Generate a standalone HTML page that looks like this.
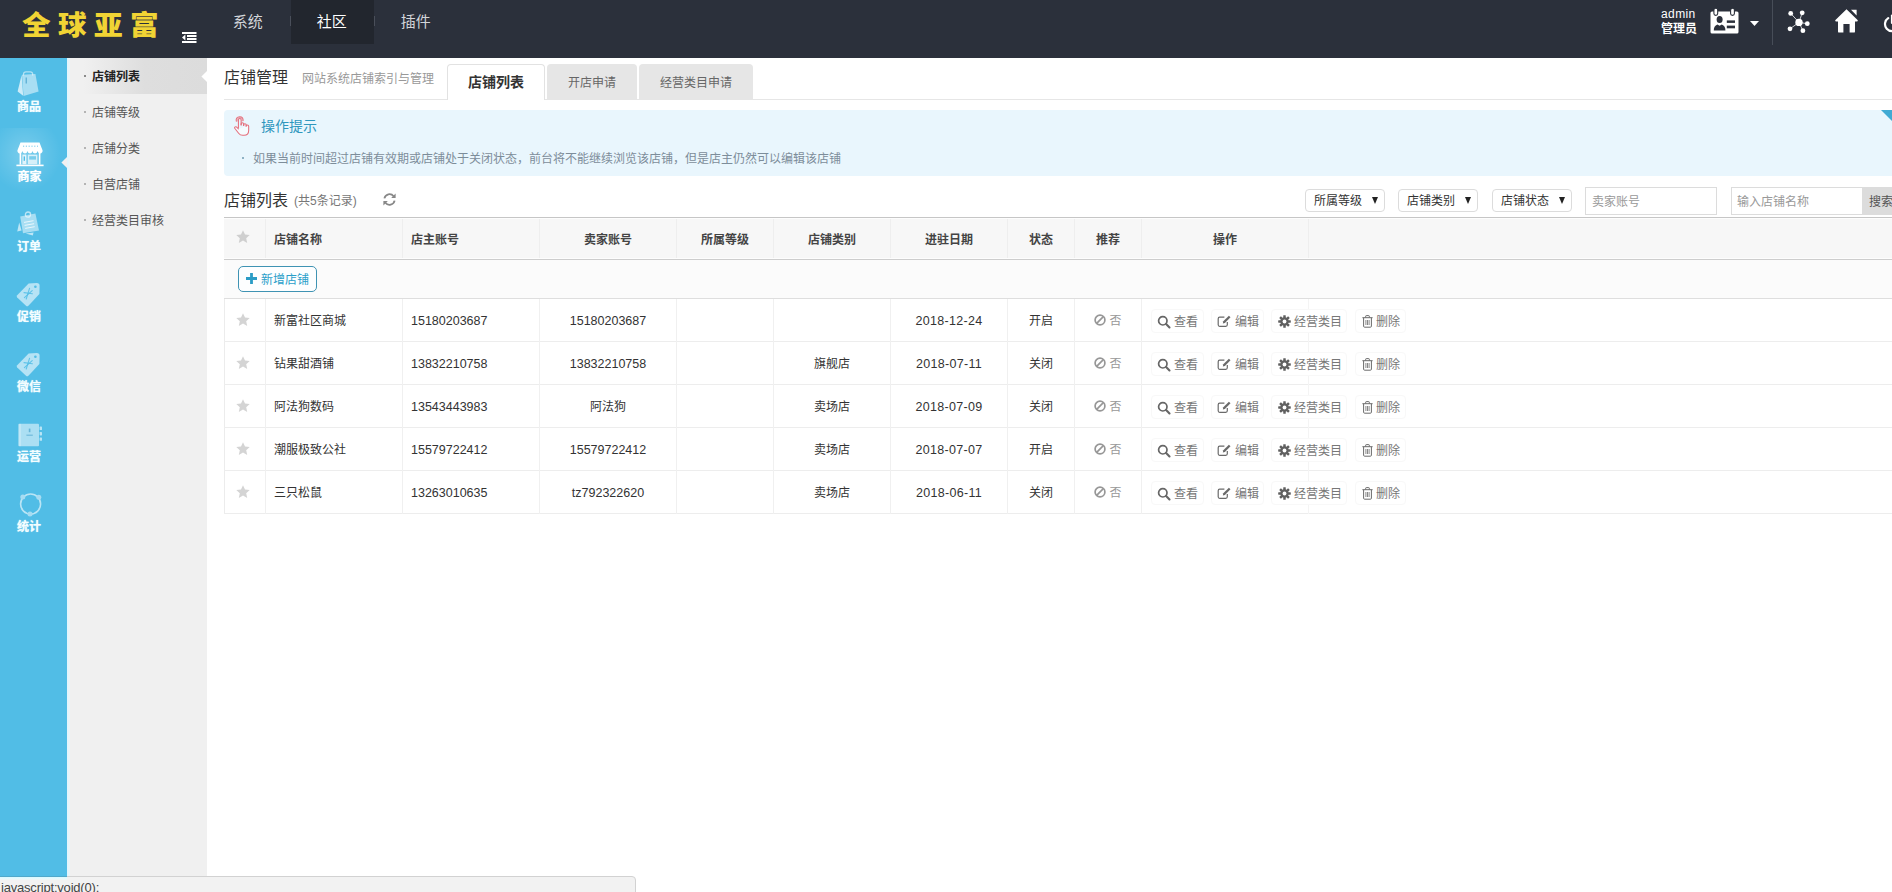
<!DOCTYPE html>
<html lang="zh-CN">
<head>
<meta charset="utf-8">
<title>店铺管理</title>
<style>
*{box-sizing:border-box;margin:0;padding:0}
html,body{width:1892px;height:892px;overflow:hidden;background:#fff}
body{font-family:"Liberation Sans","Noto Sans CJK SC",sans-serif;font-size:12px;color:#333;position:relative}
.a{position:absolute;white-space:nowrap}
svg{position:absolute;overflow:visible}
/* header */
#hdr{position:absolute;left:0;top:0;width:1892px;height:58px;background:#2b303b}
#logo{left:22px;top:1px;font-size:28.6px;font-weight:900;color:#f1d434;letter-spacing:7.4px;line-height:44px;font-family:"Noto Sans CJK SC",sans-serif;transform:scaleY(.96);transform-origin:0 50%}
.nav{position:absolute;top:0;height:44px;line-height:43px;text-indent:-1.5px;font-size:15px;color:#d3d5d9;text-align:center;width:83px}
.nav.on{background:#22262e;color:#fff}
.navsep{position:absolute;top:16px;width:1px;height:10px;background:#4a4f5a}
/* left bar */
#lbar{position:absolute;left:0;top:58px;width:67px;height:834px;background:#51bde6}
.li{position:absolute;left:0;width:58px;text-align:center;color:#f4fdff;font-size:12px;font-weight:700;line-height:14px;letter-spacing:0;text-shadow:0 0 1px rgba(235,252,255,.85)}
#sub{position:absolute;left:67px;top:58px;width:140px;height:834px;background:#f0f0f0}
.si{position:absolute;left:0;width:140px;height:36px;line-height:39px;padding-left:25px;font-size:12px;color:#555}
.si:before{content:"";position:absolute;left:17px;top:17px;width:2px;height:2px;background:#b4b4b4}
.si.on{background:linear-gradient(90deg,#f0f0f0 12%,#dedede 55%,#dcdcdc);color:#222;font-weight:700}
.si.on:before{background:#8a8a8a}
.tab{position:absolute;top:64px;height:35px;line-height:39px;text-align:center;font-size:12px;color:#666;background:#e6e6e6;border-radius:4px 4px 0 0}
.tab.on{height:36px;background:#fff;border:1px solid #e2e2e2;border-bottom:0;font-size:14px;font-weight:700;color:#333;line-height:34px}
.sel{position:absolute;top:189px;width:80px;height:23px;border:1px solid #dcdcdc;border-radius:4px;background:#fff;line-height:23px;padding-left:8px;font-size:12px;color:#333}
.sel i{position:absolute;right:6px;top:7px;width:0;height:0;border-left:3.5px solid transparent;border-right:3.5px solid transparent;border-top:7px solid #222}
.inp{position:absolute;top:187px;height:28px;border:1px solid #dcdcdc;background:#fff;line-height:29px;padding-left:6px;font-size:12px;color:#999}
/* table */
#thead{position:absolute;left:224px;top:217px;width:1668px;height:43px;background:#f7f7f7;border-top:1px solid #c6c6c6;border-bottom:1px solid #cdcdcd;box-shadow:inset 0 1px #fdfdfd,inset 0 -1px #fdfdfd}
#tool{position:absolute;left:224px;top:260px;width:1668px;height:39px;background:#fbfbfb;border-bottom:1px solid #dedede}
.th{position:absolute;top:219px;height:39px;line-height:42px;font-weight:700;color:#444;font-size:12px;text-align:center;border-left:1px solid #eee}
.row{position:absolute;left:224px;width:1668px;height:43px;border-bottom:1px solid #ededed;box-shadow:inset 1px 0 #ececec}
.c{position:absolute;top:0;height:43px;line-height:45px;text-align:center;border-left:1px solid #f0f0f0;font-size:12px;color:#333;white-space:nowrap}
.c.l{text-align:left;padding-left:8px}
.n{font-size:12.5px}
.d{letter-spacing:.3px}
.btn{position:absolute;top:10px;height:24px;border:1px solid #f8f8f8;border-radius:4px;background:#fff;color:#777;font-size:12px;line-height:24px;white-space:nowrap}
.btn span{position:absolute;top:0}
</style>
</head>
<body>
<div id="hdr">
  <div id="logo" class="a">全球亚富</div>
  <svg style="left:182px;top:32px" width="15" height="11" viewBox="0 0 15 11"><g fill="#fff"><rect x="0" y="0" width="14.5" height="2"/><rect x="5" y="3" width="9.5" height="2"/><rect x="5" y="6" width="9.5" height="2"/><rect x="0" y="9" width="14.5" height="2"/><path d="M0 5.5 L3.4 2.6 V8.4 Z"/></g></svg>
  <div class="nav" style="left:207px">系统</div>
  <div class="nav on" style="left:291px">社区</div>
  <div class="nav" style="left:375px">插件</div>
  <div class="navsep" style="left:290px"></div>
  <div class="navsep" style="left:374px"></div>
  <!-- right -->
  <div class="a" style="left:1661px;top:7px;font-size:12px;line-height:14px;color:#fff;letter-spacing:.4px">admin</div>
  <div class="a" style="left:1661px;top:22px;font-size:12px;line-height:14px;color:#fff;font-weight:700">管理员</div>
  <svg style="left:1710px;top:8px" width="29" height="26" viewBox="0 0 29 26">
    <path fill="#fff" d="M2 3.4 H27 Q28.5 3.4 28.5 4.9 V24 Q28.5 25.5 27 25.5 H2 Q0.5 25.5 0.5 24 V4.9 Q0.5 3.4 2 3.4 Z"/>
    <rect x="3.9" y="0.2" width="3.8" height="7.2" rx="1.9" fill="#fff" stroke="#2b303b" stroke-width="1.1"/>
    <rect x="20.6" y="0.2" width="3.8" height="7.2" rx="1.9" fill="#fff" stroke="#2b303b" stroke-width="1.1"/>
    <ellipse cx="9.6" cy="11.6" rx="3" ry="3.5" fill="#2b303b"/>
    <path fill="#2b303b" d="M3.8 22.6 Q3.6 18.2 7.4 16.6 L9.6 17.8 L11.8 16.6 Q15.6 18.2 15.4 22.6 Z"/>
    <rect x="16.8" y="12.4" width="8.2" height="2.5" fill="#2b303b"/>
    <rect x="16.8" y="17.6" width="8.2" height="2.7" fill="#2b303b"/>
  </svg>
  <svg style="left:1750px;top:21px" width="9" height="5" viewBox="0 0 9 5"><path d="M0 0 H9 L4.5 5 Z" fill="#fff"/></svg>
  <div class="a" style="left:1772px;top:0;width:1px;height:45px;background:#474d58"></div>
  <svg style="left:1786px;top:10px" width="25" height="24" viewBox="0 0 25 24">
    <g stroke="#cfd1d4" stroke-width="1"><line x1="13" y1="12.4" x2="4.7" y2="3.4"/><line x1="13" y1="12.4" x2="16.2" y2="2.8"/><line x1="13" y1="12.4" x2="21.3" y2="13.7"/><line x1="13" y1="12.4" x2="16.9" y2="20.7"/><line x1="13" y1="12.4" x2="4" y2="18.8"/></g>
    <g fill="#fff"><circle cx="13" cy="12.4" r="3.7"/><circle cx="4.7" cy="3.4" r="2.4"/><circle cx="16.2" cy="2.8" r="2.4"/><circle cx="21.3" cy="13.7" r="2.4"/><circle cx="16.9" cy="20.7" r="2.4"/><circle cx="4" cy="18.8" r="2.4"/></g>
  </svg>
  <svg style="left:1835px;top:9px" width="23" height="24" viewBox="0 0 23 24">
    <path fill="#fff" d="M11.5 0.3 L22.8 11.2 Q23 12.6 21.6 12.6 H20 V22.4 Q20 23.6 18.8 23.6 H14.6 V15 H8.4 V23.6 H4.2 Q3 23.6 3 22.4 V12.6 H1.4 Q0 12.6 0.2 11.2 Z"/>
    <path fill="#fff" d="M16 0.8 H21.6 V6.6 Z"/>
  </svg>
  <svg style="left:1883px;top:15px" width="18" height="18" viewBox="0 0 18 18"><path d="M5.2 3.2 A7 7 0 1 0 12.8 3.2" fill="none" stroke="#fff" stroke-width="2.2" stroke-linecap="round"/><line x1="9" y1="0.6" x2="9" y2="8" stroke="#fff" stroke-width="2.2" stroke-linecap="round"/></svg>
</div>
<div id="lbar">
  <!-- active glow -->
  <div class="a" style="left:0;top:70px;width:67px;height:70px;background:radial-gradient(ellipse 36px 38px at 25px 26px,rgba(255,255,255,.24),rgba(255,255,255,.09) 60%,rgba(255,255,255,0) 100%)"></div>
  <!-- 商品 bag -->
  <svg style="left:17px;top:13px" width="22" height="26" viewBox="0 0 22 26">
    <path d="M6.5 4.5 V3.2 Q6.5 0.8 9 0.8 H13.2 Q15.7 0.8 15.7 3.2 V4.5" fill="none" stroke="#fff" stroke-opacity=".55" stroke-width="1.2"/>
    <path d="M4.6 4 L6.2 24.8 L0.6 20.4 Z" fill="#fff" fill-opacity=".7"/>
    <path d="M5 3.8 L18.4 3 L21.6 20.4 L6.6 25 Z" fill="#fff" fill-opacity=".5"/>
    <rect x="8.6" y="6.5" width="1.3" height="6" fill="#4aa3cc" fill-opacity=".8"/>
  </svg>
  <div class="li" style="top:42px">商品</div>
  <!-- 商家 store (active) -->
  <svg style="left:16px;top:84px" width="28" height="25" viewBox="0 0 28 25">
    <path fill="#fff" d="M4.5 0.5 H23.5 L26.6 8.6 Q26.6 11.4 24.1 11.4 Q21.8 11.4 21.6 9 Q21.3 11.4 19 11.4 Q16.7 11.4 16.5 9 Q16.2 11.4 14 11.4 Q11.7 11.4 11.5 9 Q11.2 11.4 9 11.4 Q6.6 11.4 6.4 9 Q6.2 11.4 3.9 11.4 Q1.4 11.4 1.4 8.6 Z"/>
    <g stroke="#51bde6" stroke-width=".8" stroke-dasharray="1.2 1.6"><line x1="7" y1="4.2" x2="22" y2="4.2"/></g>
    <rect x="3.6" y="11" width="1.6" height="11.6" fill="#fff"/>
    <rect x="22.8" y="11" width="1.6" height="11.6" fill="#fff"/>
    <rect x="6.4" y="12.6" width="4" height="9.6" fill="#fff" fill-opacity=".8"/>
    <rect x="7.6" y="14.4" width="1.4" height="4.4" fill="#51bde6"/>
    <rect x="11.8" y="12.6" width="9.6" height="9.6" fill="#fff" fill-opacity=".72"/>
    <rect x="13.2" y="14.2" width="6.8" height="3.4" fill="#51bde6" fill-opacity=".7"/>
    <rect x="0.4" y="22.6" width="27.2" height="1.6" fill="#fff"/>
  </svg>
  <div class="li" style="top:112px;color:#fff;padding-left:1px">商家</div>
  <!-- arrow -->
  <svg style="left:61px;top:99px" width="6" height="11" viewBox="0 0 6 11"><path d="M6 0 V11 L0.4 5.5 Z" fill="#f0f0f0"/></svg>
  <!-- 订单 -->
  <svg style="left:17px;top:153px" width="23" height="26" viewBox="0 0 23 26">
    <path d="M2.2 11.5 L0.2 20.6 L4.6 19.6 Z" fill="#fff" fill-opacity=".62"/>
    <path d="M8.6 22.4 L15.8 24.6 L16.6 21.6 Z" fill="#fff" fill-opacity=".62"/>
    <path d="M3.2 5.4 L18.4 2.6 L22 19.4 L6 22.2 Z" fill="#fff" fill-opacity=".5"/>
    <circle cx="11" cy="3.6" r="2.6" fill="none" stroke="#fff" stroke-opacity=".6" stroke-width="1.3"/>
    <g stroke="#fff" stroke-opacity=".75" stroke-width="1"><line x1="7" y1="11.4" x2="16.5" y2="9.7"/><line x1="7.6" y1="14.4" x2="17.1" y2="12.7"/><line x1="8.2" y1="17.4" x2="17.7" y2="15.7"/></g>
  </svg>
  <div class="li" style="top:182px">订单</div>
  <!-- 促销 tag -->
  <svg style="left:16px;top:224px" width="24" height="25" viewBox="0 0 24 25">
    <path d="M12.6 1.4 L20.8 1 Q23.6 1 23.6 3.8 L23.4 12 L12.4 23.8 Q11.2 24.8 10 23.8 L1.2 15.6 Q0.2 14.4 1.2 13.2 Z" fill="#fff" fill-opacity=".58"/>
    <circle cx="19.4" cy="4.8" r="1.3" fill="#51bde6"/>
    <g stroke="#51bde6" stroke-opacity=".85" stroke-width="1.1" stroke-linecap="round"><line x1="13.6" y1="6.2" x2="10.2" y2="17"/><line x1="8" y1="10.6" x2="16.4" y2="11.8"/><line x1="8.4" y1="15.6" x2="16.2" y2="8.6"/></g>
  </svg>
  <div class="li" style="top:252px">促销</div>
  <!-- 微信 tag -->
  <svg style="left:16px;top:294px" width="24" height="25" viewBox="0 0 24 25">
    <path d="M12.6 1.4 L20.8 1 Q23.6 1 23.6 3.8 L23.4 12 L12.4 23.8 Q11.2 24.8 10 23.8 L1.2 15.6 Q0.2 14.4 1.2 13.2 Z" fill="#fff" fill-opacity=".58"/>
    <circle cx="19.4" cy="4.8" r="1.3" fill="#51bde6"/>
    <g stroke="#51bde6" stroke-opacity=".85" stroke-width="1.1" stroke-linecap="round"><line x1="13.6" y1="6.2" x2="10.2" y2="17"/><line x1="8" y1="10.6" x2="16.4" y2="11.8"/><line x1="8.4" y1="15.6" x2="16.2" y2="8.6"/></g>
  </svg>
  <div class="li" style="top:322px">微信</div>
  <!-- 运营 notebook -->
  <svg style="left:18px;top:365px" width="25" height="24" viewBox="0 0 25 24">
    <rect x="0.5" y="0.8" width="20.5" height="22.4" rx="1" fill="#fff" fill-opacity=".52"/>
    <rect x="0.5" y="0.8" width="2.6" height="22.4" fill="#fff" fill-opacity=".25"/>
    <g fill="#fff" fill-opacity=".6"><rect x="21.6" y="3.6" width="2.4" height="3.4" rx=".6"/><rect x="21.6" y="9" width="2.4" height="3.4" rx=".6"/><rect x="21.6" y="14.4" width="2.4" height="3.4" rx=".6"/></g>
    <rect x="10.8" y="5.6" width="1.6" height="3.6" fill="#4aa3cc" fill-opacity=".7"/>
    <rect x="8.4" y="11.6" width="6.4" height="1.2" fill="#4aa3cc" fill-opacity=".6"/>
  </svg>
  <div class="li" style="top:392px">运营</div>
  <!-- 统计 -->
  <svg style="left:19px;top:434px" width="24" height="25" viewBox="0 0 24 25">
    <circle cx="11.6" cy="12" r="10" fill="none" stroke="#fff" stroke-opacity=".6" stroke-width="1.6"/>
    <g fill="#a6dcf2"><circle cx="3.8" cy="5" r="2.5"/><circle cx="19.8" cy="5.2" r="2.5"/><circle cx="11" cy="22" r="2.5"/></g>
  </svg>
  <div class="li" style="top:462px">统计</div>
</div>
<div id="sub">
  <div class="si on" style="top:0">店铺列表</div>
  <svg style="left:134px;top:13px" width="6" height="11" viewBox="0 0 6 11"><path d="M6 0 V11 L0.4 5.5 Z" fill="#fff"/></svg>
  <div class="si" style="top:36px">店铺等级</div>
  <div class="si" style="top:72px">店铺分类</div>
  <div class="si" style="top:108px">自营店铺</div>
  <div class="si" style="top:144px">经营类目审核</div>
  <div class="a" style="left:0;top:0;width:3px;height:834px;background:linear-gradient(90deg,#e0f4fc,#e6f5fb 66%,#edf3f5)"></div>
</div>

<!-- title -->
<div class="a" style="left:224px;top:66px;font-size:16px;line-height:24px;color:#333">店铺管理</div>
<div class="a" style="left:302px;top:69px;font-size:12px;line-height:20px;color:#999">网站系统店铺索引与管理</div>
<div class="a" style="left:224px;top:99px;width:1668px;height:1px;background:#e6e6e6"></div>
<div class="tab on" style="left:447px;width:98px">店铺列表</div>
<div class="tab" style="left:547px;width:90px">开店申请</div>
<div class="tab" style="left:639px;width:114px">经营类目申请</div>
<!-- tip -->
<div class="a" style="left:224px;top:110px;width:1700px;height:66px;background:#e9f6fd;border-radius:4px"></div>
<svg style="left:1881px;top:110px" width="11" height="11" viewBox="0 0 11 11"><path d="M0 0 H11 V11 Z" fill="#41aad3"/></svg>
<svg style="left:233px;top:115.6px" width="18.4" height="20.6" viewBox="0 0 19 22" preserveAspectRatio="none">
  <g fill="none" stroke="#e56f7c" stroke-width="1.1" stroke-linecap="round" stroke-linejoin="round">
    <path d="M5.6 12.4 V4.2 Q5.6 2.6 7 2.6 Q8.4 2.6 8.4 4.2 V9.4"/>
    <path d="M8.4 9.6 V8.4 Q8.4 7.2 9.7 7.2 Q11 7.2 11 8.4 V10.2"/>
    <path d="M11 10.2 V9.4 Q11 8.2 12.3 8.2 Q13.6 8.2 13.6 9.4 V11"/>
    <path d="M13.6 11 V10.6 Q13.6 9.6 14.8 9.6 Q16.2 9.6 16.2 11 V15.2 Q16.2 20.6 11.4 20.6 H10 Q7.4 20.6 5.8 18.4 L2 13.4 Q1.2 12.2 2.2 11.6 Q3.2 11 4.2 12.2 L5.6 13.8" fill="#fff" fill-opacity=".55"/>
    <path d="M4.4 5.4 Q4 2 7 1.8 Q9.8 2 9.4 5" stroke-opacity=".55"/>
    <path d="M3.4 5.6 Q2.6 1.2 7 0.8 Q10.8 1 10.4 5"/>
  </g>
</svg>
<div class="a" style="left:261px;top:116px;font-size:14px;line-height:20px;color:#2f97bd">操作提示</div>
<div class="a" style="left:242px;top:157px;width:2px;height:2px;background:#8fb2c4"></div>
<div class="a" style="left:253px;top:149px;font-size:12px;line-height:20px;color:#7d8d9a">如果当前时间超过店铺有效期或店铺处于关闭状态，前台将不能继续浏览该店铺，但是店主仍然可以编辑该店铺</div>
<!-- list title -->
<div class="a" style="left:224px;top:189px;font-size:16px;line-height:24px;color:#333">店铺列表</div>
<div class="a" style="left:294px;top:191px;font-size:12px;line-height:20px;color:#777">(共5条记录)</div>
<svg style="left:383px;top:193px" width="13" height="13" viewBox="0 0 13 13">
  <g fill="none" stroke="#888" stroke-width="1.8"><path d="M1.4 5.4 A5.2 5.2 0 0 1 10.6 3.2"/><path d="M11.6 7.6 A5.2 5.2 0 0 1 2.4 9.8"/></g>
  <path d="M12.6 0.6 V5 H8.2 Z" fill="#888"/><path d="M0.4 12.4 V8 H4.8 Z" fill="#888"/>
</svg>
<!-- filters -->
<div class="sel" style="left:1305px">所属等级<i></i></div>
<div class="sel" style="left:1398px">店铺类别<i></i></div>
<div class="sel" style="left:1492px">店铺状态<i></i></div>
<div class="inp" style="left:1585px;width:132px">卖家账号</div>
<div class="inp" style="left:1731px;width:133px;padding-left:5px">输入店铺名称</div>
<div class="a" style="left:1862px;top:187px;width:40px;height:28px;background:#dcdcdc;line-height:31px;padding-left:7px;font-size:12px;color:#555">搜索</div>
<div id="thead"></div><div id="tool"></div>
<div class="th" style="left:224px;width:41px;border-left:0;"></div>
<svg style="left:236px;top:230px" width="14" height="13" viewBox="0 0 14 13"><path d="M7 0.3 L9 4.6 L13.7 5.1 L10.2 8.3 L11.2 12.9 L7 10.5 L2.8 12.9 L3.8 8.3 L0.3 5.1 L5 4.6 Z" fill="#cfcfcf"/></svg>
<div class="th" style="left:265px;width:137px;text-align:left;padding-left:8px">店铺名称</div>
<div class="th" style="left:402px;width:137px;text-align:left;padding-left:8px">店主账号</div>
<div class="th" style="left:539px;width:137px">卖家账号</div>
<div class="th" style="left:676px;width:97px">所属等级</div>
<div class="th" style="left:773px;width:117px">店铺类别</div>
<div class="th" style="left:890px;width:117px">进驻日期</div>
<div class="th" style="left:1007px;width:67px">状态</div>
<div class="th" style="left:1074px;width:67px">推荐</div>
<div class="th" style="left:1141px;width:167px">操作</div>
<div class="th" style="left:1308px;width:584px"></div>
<div class="a" style="left:238px;top:266px;width:79px;height:26px;border:1px solid #3f93b3;border-radius:5px;background:#fdfeff"></div>
<svg style="left:246px;top:273px" width="11" height="11" viewBox="0 0 11 11"><path d="M4.1 0 H6.9 V4.1 H11 V6.9 H6.9 V11 H4.1 V6.9 H0 V4.1 H4.1 Z" fill="#2a9cc6"/></svg>
<div class="a" style="left:261px;top:270px;font-size:12px;line-height:20px;color:#2b9fca">新增店铺</div>
<div class="row" style="top:299px">
<div class="c" style="left:0px;width:41px;border-left:0;"></div>
<div class="c l" style="left:41px;width:137px">新富社区商城</div>
<div class="c l n" style="left:178px;width:137px">15180203687</div>
<div class="c n" style="left:315px;width:137px">15180203687</div>
<div class="c" style="left:452px;width:97px"></div>
<div class="c" style="left:549px;width:117px"></div>
<div class="c n d" style="left:666px;width:117px">2018-12-24</div>
<div class="c" style="left:783px;width:67px">开启</div>
<div class="c" style="left:850px;width:67px;color:#999;padding-left:15px">否</div>
<div class="c" style="left:917px;width:167px"></div>
<div class="c" style="left:1084px;width:584px;border-left-color:#f4f4f4"></div>
<svg style="left:12px;top:14px" width="14" height="13" viewBox="0 0 14 13"><path d="M7 0.3 L9 4.6 L13.7 5.1 L10.2 8.3 L11.2 12.9 L7 10.5 L2.8 12.9 L3.8 8.3 L0.3 5.1 L5 4.6 Z" fill="#d4d4d4"/></svg>
<svg style="left:870px;top:15px" width="12" height="12" viewBox="0 0 12 12"><circle cx="6" cy="6" r="4.9" fill="none" stroke="#979797" stroke-width="1.7"/><line x1="2.7" y1="9.3" x2="9.3" y2="2.7" stroke="#979797" stroke-width="1.7"/></svg>
<div class="btn" style="left:927px;width:53px"><svg style="left:5px;top:5px" width="14" height="14" viewBox="0 0 14 14"><circle cx="5.8" cy="5.8" r="4.2" fill="none" stroke="#666" stroke-width="1.7"/><line x1="9.1" y1="9.1" x2="12.5" y2="12.5" stroke="#666" stroke-width="2.1" stroke-linecap="round"/></svg><span style="left:22px">查看</span></div>
<div class="btn" style="left:987px;width:53px"><svg style="left:5px;top:4px" width="15" height="14" viewBox="0 0 15 14"><path d="M10.3 8 V10.8 Q10.3 12.3 8.8 12.3 H2.7 Q1.2 12.3 1.2 10.8 V4.7 Q1.2 3.2 2.7 3.2 H7.4" fill="none" stroke="#6a6a6a" stroke-width="1.2"/><path d="M5.8 9.4 L6.3 7.3 L11.9 1.7 L13.5 3.3 L7.9 8.9 Z" fill="#6a6a6a"/></svg><span style="left:23px">编辑</span></div>
<div class="btn" style="left:1047px;width:76px"><svg style="left:6px;top:5px" width="13" height="13" viewBox="0 0 13 13"><g transform="translate(6.5 6.5)"><circle r="4.2" fill="#606060"/><g fill="#606060"><rect x="-1.25" y="-6.3" width="2.5" height="12.6" rx=".4"/><rect x="-1.25" y="-6.3" width="2.5" height="12.6" rx=".4" transform="rotate(45)"/><rect x="-1.25" y="-6.3" width="2.5" height="12.6" rx=".4" transform="rotate(90)"/><rect x="-1.25" y="-6.3" width="2.5" height="12.6" rx=".4" transform="rotate(135)"/></g><circle r="1.9" fill="#fff"/></g></svg><span style="left:22px">经营类目</span></div>
<div class="btn" style="left:1131px;width:51px"><svg style="left:6px;top:5px" width="11" height="13" viewBox="0 0 11 13"><g fill="none" stroke="#6a6a6a" stroke-width="1"><path d="M0.4 2.7 H10.6"/><path d="M3.7 2.5 V1.2 Q3.7 .6 4.3 .6 H6.7 Q7.3 .6 7.3 1.2 V2.5"/><path d="M1.6 2.9 V11.2 Q1.6 12.2 2.6 12.2 H8.4 Q9.4 12.2 9.4 11.2 V2.9"/><path d="M3.9 5 V10 M5.5 5 V10 M7.1 5 V10" stroke-width=".8"/></g></svg><span style="left:20px">删除</span></div>
</div>
<div class="row" style="top:342px">
<div class="c" style="left:0px;width:41px;border-left:0;"></div>
<div class="c l" style="left:41px;width:137px">钻果甜酒铺</div>
<div class="c l n" style="left:178px;width:137px">13832210758</div>
<div class="c n" style="left:315px;width:137px">13832210758</div>
<div class="c" style="left:452px;width:97px"></div>
<div class="c" style="left:549px;width:117px">旗舰店</div>
<div class="c n d" style="left:666px;width:117px">2018-07-11</div>
<div class="c" style="left:783px;width:67px">关闭</div>
<div class="c" style="left:850px;width:67px;color:#999;padding-left:15px">否</div>
<div class="c" style="left:917px;width:167px"></div>
<div class="c" style="left:1084px;width:584px;border-left-color:#f4f4f4"></div>
<svg style="left:12px;top:14px" width="14" height="13" viewBox="0 0 14 13"><path d="M7 0.3 L9 4.6 L13.7 5.1 L10.2 8.3 L11.2 12.9 L7 10.5 L2.8 12.9 L3.8 8.3 L0.3 5.1 L5 4.6 Z" fill="#d4d4d4"/></svg>
<svg style="left:870px;top:15px" width="12" height="12" viewBox="0 0 12 12"><circle cx="6" cy="6" r="4.9" fill="none" stroke="#979797" stroke-width="1.7"/><line x1="2.7" y1="9.3" x2="9.3" y2="2.7" stroke="#979797" stroke-width="1.7"/></svg>
<div class="btn" style="left:927px;width:53px"><svg style="left:5px;top:5px" width="14" height="14" viewBox="0 0 14 14"><circle cx="5.8" cy="5.8" r="4.2" fill="none" stroke="#666" stroke-width="1.7"/><line x1="9.1" y1="9.1" x2="12.5" y2="12.5" stroke="#666" stroke-width="2.1" stroke-linecap="round"/></svg><span style="left:22px">查看</span></div>
<div class="btn" style="left:987px;width:53px"><svg style="left:5px;top:4px" width="15" height="14" viewBox="0 0 15 14"><path d="M10.3 8 V10.8 Q10.3 12.3 8.8 12.3 H2.7 Q1.2 12.3 1.2 10.8 V4.7 Q1.2 3.2 2.7 3.2 H7.4" fill="none" stroke="#6a6a6a" stroke-width="1.2"/><path d="M5.8 9.4 L6.3 7.3 L11.9 1.7 L13.5 3.3 L7.9 8.9 Z" fill="#6a6a6a"/></svg><span style="left:23px">编辑</span></div>
<div class="btn" style="left:1047px;width:76px"><svg style="left:6px;top:5px" width="13" height="13" viewBox="0 0 13 13"><g transform="translate(6.5 6.5)"><circle r="4.2" fill="#606060"/><g fill="#606060"><rect x="-1.25" y="-6.3" width="2.5" height="12.6" rx=".4"/><rect x="-1.25" y="-6.3" width="2.5" height="12.6" rx=".4" transform="rotate(45)"/><rect x="-1.25" y="-6.3" width="2.5" height="12.6" rx=".4" transform="rotate(90)"/><rect x="-1.25" y="-6.3" width="2.5" height="12.6" rx=".4" transform="rotate(135)"/></g><circle r="1.9" fill="#fff"/></g></svg><span style="left:22px">经营类目</span></div>
<div class="btn" style="left:1131px;width:51px"><svg style="left:6px;top:5px" width="11" height="13" viewBox="0 0 11 13"><g fill="none" stroke="#6a6a6a" stroke-width="1"><path d="M0.4 2.7 H10.6"/><path d="M3.7 2.5 V1.2 Q3.7 .6 4.3 .6 H6.7 Q7.3 .6 7.3 1.2 V2.5"/><path d="M1.6 2.9 V11.2 Q1.6 12.2 2.6 12.2 H8.4 Q9.4 12.2 9.4 11.2 V2.9"/><path d="M3.9 5 V10 M5.5 5 V10 M7.1 5 V10" stroke-width=".8"/></g></svg><span style="left:20px">删除</span></div>
</div>
<div class="row" style="top:385px">
<div class="c" style="left:0px;width:41px;border-left:0;"></div>
<div class="c l" style="left:41px;width:137px">阿法狗数码</div>
<div class="c l n" style="left:178px;width:137px">13543443983</div>
<div class="c" style="left:315px;width:137px">阿法狗</div>
<div class="c" style="left:452px;width:97px"></div>
<div class="c" style="left:549px;width:117px">卖场店</div>
<div class="c n d" style="left:666px;width:117px">2018-07-09</div>
<div class="c" style="left:783px;width:67px">关闭</div>
<div class="c" style="left:850px;width:67px;color:#999;padding-left:15px">否</div>
<div class="c" style="left:917px;width:167px"></div>
<div class="c" style="left:1084px;width:584px;border-left-color:#f4f4f4"></div>
<svg style="left:12px;top:14px" width="14" height="13" viewBox="0 0 14 13"><path d="M7 0.3 L9 4.6 L13.7 5.1 L10.2 8.3 L11.2 12.9 L7 10.5 L2.8 12.9 L3.8 8.3 L0.3 5.1 L5 4.6 Z" fill="#d4d4d4"/></svg>
<svg style="left:870px;top:15px" width="12" height="12" viewBox="0 0 12 12"><circle cx="6" cy="6" r="4.9" fill="none" stroke="#979797" stroke-width="1.7"/><line x1="2.7" y1="9.3" x2="9.3" y2="2.7" stroke="#979797" stroke-width="1.7"/></svg>
<div class="btn" style="left:927px;width:53px"><svg style="left:5px;top:5px" width="14" height="14" viewBox="0 0 14 14"><circle cx="5.8" cy="5.8" r="4.2" fill="none" stroke="#666" stroke-width="1.7"/><line x1="9.1" y1="9.1" x2="12.5" y2="12.5" stroke="#666" stroke-width="2.1" stroke-linecap="round"/></svg><span style="left:22px">查看</span></div>
<div class="btn" style="left:987px;width:53px"><svg style="left:5px;top:4px" width="15" height="14" viewBox="0 0 15 14"><path d="M10.3 8 V10.8 Q10.3 12.3 8.8 12.3 H2.7 Q1.2 12.3 1.2 10.8 V4.7 Q1.2 3.2 2.7 3.2 H7.4" fill="none" stroke="#6a6a6a" stroke-width="1.2"/><path d="M5.8 9.4 L6.3 7.3 L11.9 1.7 L13.5 3.3 L7.9 8.9 Z" fill="#6a6a6a"/></svg><span style="left:23px">编辑</span></div>
<div class="btn" style="left:1047px;width:76px"><svg style="left:6px;top:5px" width="13" height="13" viewBox="0 0 13 13"><g transform="translate(6.5 6.5)"><circle r="4.2" fill="#606060"/><g fill="#606060"><rect x="-1.25" y="-6.3" width="2.5" height="12.6" rx=".4"/><rect x="-1.25" y="-6.3" width="2.5" height="12.6" rx=".4" transform="rotate(45)"/><rect x="-1.25" y="-6.3" width="2.5" height="12.6" rx=".4" transform="rotate(90)"/><rect x="-1.25" y="-6.3" width="2.5" height="12.6" rx=".4" transform="rotate(135)"/></g><circle r="1.9" fill="#fff"/></g></svg><span style="left:22px">经营类目</span></div>
<div class="btn" style="left:1131px;width:51px"><svg style="left:6px;top:5px" width="11" height="13" viewBox="0 0 11 13"><g fill="none" stroke="#6a6a6a" stroke-width="1"><path d="M0.4 2.7 H10.6"/><path d="M3.7 2.5 V1.2 Q3.7 .6 4.3 .6 H6.7 Q7.3 .6 7.3 1.2 V2.5"/><path d="M1.6 2.9 V11.2 Q1.6 12.2 2.6 12.2 H8.4 Q9.4 12.2 9.4 11.2 V2.9"/><path d="M3.9 5 V10 M5.5 5 V10 M7.1 5 V10" stroke-width=".8"/></g></svg><span style="left:20px">删除</span></div>
</div>
<div class="row" style="top:428px">
<div class="c" style="left:0px;width:41px;border-left:0;"></div>
<div class="c l" style="left:41px;width:137px">潮服极致公社</div>
<div class="c l n" style="left:178px;width:137px">15579722412</div>
<div class="c n" style="left:315px;width:137px">15579722412</div>
<div class="c" style="left:452px;width:97px"></div>
<div class="c" style="left:549px;width:117px">卖场店</div>
<div class="c n d" style="left:666px;width:117px">2018-07-07</div>
<div class="c" style="left:783px;width:67px">开启</div>
<div class="c" style="left:850px;width:67px;color:#999;padding-left:15px">否</div>
<div class="c" style="left:917px;width:167px"></div>
<div class="c" style="left:1084px;width:584px;border-left-color:#f4f4f4"></div>
<svg style="left:12px;top:14px" width="14" height="13" viewBox="0 0 14 13"><path d="M7 0.3 L9 4.6 L13.7 5.1 L10.2 8.3 L11.2 12.9 L7 10.5 L2.8 12.9 L3.8 8.3 L0.3 5.1 L5 4.6 Z" fill="#d4d4d4"/></svg>
<svg style="left:870px;top:15px" width="12" height="12" viewBox="0 0 12 12"><circle cx="6" cy="6" r="4.9" fill="none" stroke="#979797" stroke-width="1.7"/><line x1="2.7" y1="9.3" x2="9.3" y2="2.7" stroke="#979797" stroke-width="1.7"/></svg>
<div class="btn" style="left:927px;width:53px"><svg style="left:5px;top:5px" width="14" height="14" viewBox="0 0 14 14"><circle cx="5.8" cy="5.8" r="4.2" fill="none" stroke="#666" stroke-width="1.7"/><line x1="9.1" y1="9.1" x2="12.5" y2="12.5" stroke="#666" stroke-width="2.1" stroke-linecap="round"/></svg><span style="left:22px">查看</span></div>
<div class="btn" style="left:987px;width:53px"><svg style="left:5px;top:4px" width="15" height="14" viewBox="0 0 15 14"><path d="M10.3 8 V10.8 Q10.3 12.3 8.8 12.3 H2.7 Q1.2 12.3 1.2 10.8 V4.7 Q1.2 3.2 2.7 3.2 H7.4" fill="none" stroke="#6a6a6a" stroke-width="1.2"/><path d="M5.8 9.4 L6.3 7.3 L11.9 1.7 L13.5 3.3 L7.9 8.9 Z" fill="#6a6a6a"/></svg><span style="left:23px">编辑</span></div>
<div class="btn" style="left:1047px;width:76px"><svg style="left:6px;top:5px" width="13" height="13" viewBox="0 0 13 13"><g transform="translate(6.5 6.5)"><circle r="4.2" fill="#606060"/><g fill="#606060"><rect x="-1.25" y="-6.3" width="2.5" height="12.6" rx=".4"/><rect x="-1.25" y="-6.3" width="2.5" height="12.6" rx=".4" transform="rotate(45)"/><rect x="-1.25" y="-6.3" width="2.5" height="12.6" rx=".4" transform="rotate(90)"/><rect x="-1.25" y="-6.3" width="2.5" height="12.6" rx=".4" transform="rotate(135)"/></g><circle r="1.9" fill="#fff"/></g></svg><span style="left:22px">经营类目</span></div>
<div class="btn" style="left:1131px;width:51px"><svg style="left:6px;top:5px" width="11" height="13" viewBox="0 0 11 13"><g fill="none" stroke="#6a6a6a" stroke-width="1"><path d="M0.4 2.7 H10.6"/><path d="M3.7 2.5 V1.2 Q3.7 .6 4.3 .6 H6.7 Q7.3 .6 7.3 1.2 V2.5"/><path d="M1.6 2.9 V11.2 Q1.6 12.2 2.6 12.2 H8.4 Q9.4 12.2 9.4 11.2 V2.9"/><path d="M3.9 5 V10 M5.5 5 V10 M7.1 5 V10" stroke-width=".8"/></g></svg><span style="left:20px">删除</span></div>
</div>
<div class="row" style="top:471px">
<div class="c" style="left:0px;width:41px;border-left:0;"></div>
<div class="c l" style="left:41px;width:137px">三只松鼠</div>
<div class="c l n" style="left:178px;width:137px">13263010635</div>
<div class="c n" style="left:315px;width:137px">tz792322620</div>
<div class="c" style="left:452px;width:97px"></div>
<div class="c" style="left:549px;width:117px">卖场店</div>
<div class="c n d" style="left:666px;width:117px">2018-06-11</div>
<div class="c" style="left:783px;width:67px">关闭</div>
<div class="c" style="left:850px;width:67px;color:#999;padding-left:15px">否</div>
<div class="c" style="left:917px;width:167px"></div>
<div class="c" style="left:1084px;width:584px;border-left-color:#f4f4f4"></div>
<svg style="left:12px;top:14px" width="14" height="13" viewBox="0 0 14 13"><path d="M7 0.3 L9 4.6 L13.7 5.1 L10.2 8.3 L11.2 12.9 L7 10.5 L2.8 12.9 L3.8 8.3 L0.3 5.1 L5 4.6 Z" fill="#d4d4d4"/></svg>
<svg style="left:870px;top:15px" width="12" height="12" viewBox="0 0 12 12"><circle cx="6" cy="6" r="4.9" fill="none" stroke="#979797" stroke-width="1.7"/><line x1="2.7" y1="9.3" x2="9.3" y2="2.7" stroke="#979797" stroke-width="1.7"/></svg>
<div class="btn" style="left:927px;width:53px"><svg style="left:5px;top:5px" width="14" height="14" viewBox="0 0 14 14"><circle cx="5.8" cy="5.8" r="4.2" fill="none" stroke="#666" stroke-width="1.7"/><line x1="9.1" y1="9.1" x2="12.5" y2="12.5" stroke="#666" stroke-width="2.1" stroke-linecap="round"/></svg><span style="left:22px">查看</span></div>
<div class="btn" style="left:987px;width:53px"><svg style="left:5px;top:4px" width="15" height="14" viewBox="0 0 15 14"><path d="M10.3 8 V10.8 Q10.3 12.3 8.8 12.3 H2.7 Q1.2 12.3 1.2 10.8 V4.7 Q1.2 3.2 2.7 3.2 H7.4" fill="none" stroke="#6a6a6a" stroke-width="1.2"/><path d="M5.8 9.4 L6.3 7.3 L11.9 1.7 L13.5 3.3 L7.9 8.9 Z" fill="#6a6a6a"/></svg><span style="left:23px">编辑</span></div>
<div class="btn" style="left:1047px;width:76px"><svg style="left:6px;top:5px" width="13" height="13" viewBox="0 0 13 13"><g transform="translate(6.5 6.5)"><circle r="4.2" fill="#606060"/><g fill="#606060"><rect x="-1.25" y="-6.3" width="2.5" height="12.6" rx=".4"/><rect x="-1.25" y="-6.3" width="2.5" height="12.6" rx=".4" transform="rotate(45)"/><rect x="-1.25" y="-6.3" width="2.5" height="12.6" rx=".4" transform="rotate(90)"/><rect x="-1.25" y="-6.3" width="2.5" height="12.6" rx=".4" transform="rotate(135)"/></g><circle r="1.9" fill="#fff"/></g></svg><span style="left:22px">经营类目</span></div>
<div class="btn" style="left:1131px;width:51px"><svg style="left:6px;top:5px" width="11" height="13" viewBox="0 0 11 13"><g fill="none" stroke="#6a6a6a" stroke-width="1"><path d="M0.4 2.7 H10.6"/><path d="M3.7 2.5 V1.2 Q3.7 .6 4.3 .6 H6.7 Q7.3 .6 7.3 1.2 V2.5"/><path d="M1.6 2.9 V11.2 Q1.6 12.2 2.6 12.2 H8.4 Q9.4 12.2 9.4 11.2 V2.9"/><path d="M3.9 5 V10 M5.5 5 V10 M7.1 5 V10" stroke-width=".8"/></g></svg><span style="left:20px">删除</span></div>
</div>
<div class="a" style="left:-1px;top:876px;width:637px;height:20px;background:#f2f2f2;border:1px solid #d2d2d2;border-top-right-radius:4px"></div>
<div class="a" style="left:0;top:876px;width:67px;height:1px;background:#4fa9cb"></div><div class="a" style="left:0;top:877px;width:67px;height:3px;background:linear-gradient(#d8f9ff,#e6fbfd 60%,#f2f2f2)"></div>
<div class="a" style="left:1px;top:880px;font-size:13px;letter-spacing:-.2px;line-height:16px;color:#444">javascript:void(0);</div>
</body></html>
